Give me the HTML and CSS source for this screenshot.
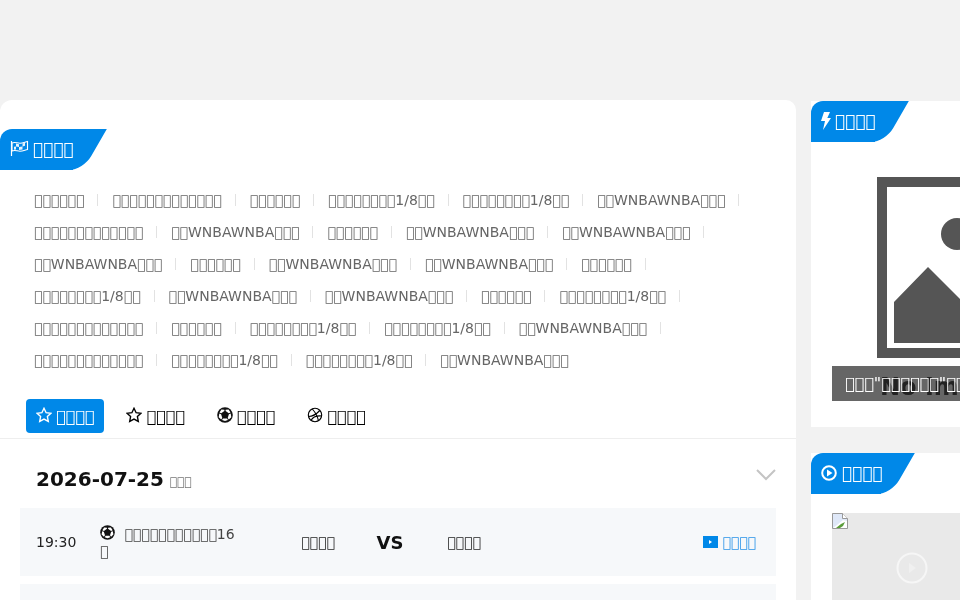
FILE: index.html
```html
<!DOCTYPE html>
<html>
<head>
    <meta charset="utf-8">
    <meta name="viewport" content="width=device-width, initial-scale=1.0">
    <link rel="stylesheet" href="styles.css">
</head>
<body>
    <div class="page">
        <div class="main-col">
            <div class="hot-box">
                <div class="tag">
                    <svg class="tag-icon" viewBox="0 0 19 17"><path d="M1.500 1v15" stroke="#fff" stroke-width="1.200"/><path d="M2 3c3-1.500 5 .3 8 .3 2.500 0 4.500-1 7.500-1.800v8c-3 .8-5 1.800-7.500 1.800-3 0-5-1.800-8-.3z" fill="none" stroke="#fff" stroke-width="1.100"/><path d="M6 3.500l3 .7v2.800l3.500-.5V3.500l2.500-.8v3l-2.500.8v3L9 10V7L6 6.500v3L4 9.800V6.800l2-.3z" fill="#fff" opacity=".9"/></svg>
                    <span>&#xE000;&#xE000;&#xE000;&#xE000;</span>
                </div>
                <div class="hot-list">
                    <a>&#xE000;&#xE000;&#xE000;&#xE000;&#xE000;&#xE000;</a>
                    <a>&#xE000;&#xE000;&#xE000;&#xE000;&#xE000;&#xE000;&#xE000;&#xE000;&#xE000;&#xE000;&#xE000;&#xE000;&#xE000;</a>
                    <a>&#xE000;&#xE000;&#xE000;&#xE000;&#xE000;&#xE000;</a>
                    <a>&#xE000;&#xE000;&#xE000;&#xE000;&#xE000;&#xE000;&#xE000;&#xE000;1/8&#xE000;&#xE000;</a>
                    <a>&#xE000;&#xE000;&#xE000;&#xE000;&#xE000;&#xE000;&#xE000;&#xE000;1/8&#xE000;&#xE000;</a>
                    <a>&#xE000;&#xE000;WNBAWNBA&#xE000;&#xE000;&#xE000;</a>
                    <a>&#xE000;&#xE000;&#xE000;&#xE000;&#xE000;&#xE000;&#xE000;&#xE000;&#xE000;&#xE000;&#xE000;&#xE000;&#xE000;</a>
                    <a>&#xE000;&#xE000;WNBAWNBA&#xE000;&#xE000;&#xE000;</a>
                    <a>&#xE000;&#xE000;&#xE000;&#xE000;&#xE000;&#xE000;</a>
                    <a>&#xE000;&#xE000;WNBAWNBA&#xE000;&#xE000;&#xE000;</a>
                    <a>&#xE000;&#xE000;WNBAWNBA&#xE000;&#xE000;&#xE000;</a>
                    <a>&#xE000;&#xE000;WNBAWNBA&#xE000;&#xE000;&#xE000;</a>
                    <a>&#xE000;&#xE000;&#xE000;&#xE000;&#xE000;&#xE000;</a>
                    <a>&#xE000;&#xE000;WNBAWNBA&#xE000;&#xE000;&#xE000;</a>
                    <a>&#xE000;&#xE000;WNBAWNBA&#xE000;&#xE000;&#xE000;</a>
                    <a>&#xE000;&#xE000;&#xE000;&#xE000;&#xE000;&#xE000;</a>
                    <a>&#xE000;&#xE000;&#xE000;&#xE000;&#xE000;&#xE000;&#xE000;&#xE000;1/8&#xE000;&#xE000;</a>
                    <a>&#xE000;&#xE000;WNBAWNBA&#xE000;&#xE000;&#xE000;</a>
                    <a>&#xE000;&#xE000;WNBAWNBA&#xE000;&#xE000;&#xE000;</a>
                    <a>&#xE000;&#xE000;&#xE000;&#xE000;&#xE000;&#xE000;</a>
                    <a>&#xE000;&#xE000;&#xE000;&#xE000;&#xE000;&#xE000;&#xE000;&#xE000;1/8&#xE000;&#xE000;</a>
                    <a>&#xE000;&#xE000;&#xE000;&#xE000;&#xE000;&#xE000;&#xE000;&#xE000;&#xE000;&#xE000;&#xE000;&#xE000;&#xE000;</a>
                    <a>&#xE000;&#xE000;&#xE000;&#xE000;&#xE000;&#xE000;</a>
                    <a>&#xE000;&#xE000;&#xE000;&#xE000;&#xE000;&#xE000;&#xE000;&#xE000;1/8&#xE000;&#xE000;</a>
                    <a>&#xE000;&#xE000;&#xE000;&#xE000;&#xE000;&#xE000;&#xE000;&#xE000;1/8&#xE000;&#xE000;</a>
                    <a>&#xE000;&#xE000;WNBAWNBA&#xE000;&#xE000;&#xE000;</a>
                    <a>&#xE000;&#xE000;&#xE000;&#xE000;&#xE000;&#xE000;&#xE000;&#xE000;&#xE000;&#xE000;&#xE000;&#xE000;&#xE000;</a>
                    <a>&#xE000;&#xE000;&#xE000;&#xE000;&#xE000;&#xE000;&#xE000;&#xE000;1/8&#xE000;&#xE000;</a>
                    <a>&#xE000;&#xE000;&#xE000;&#xE000;&#xE000;&#xE000;&#xE000;&#xE000;1/8&#xE000;&#xE000;</a>
                    <a>&#xE000;&#xE000;WNBAWNBA&#xE000;&#xE000;&#xE000;</a>
                </div>
                <div class="tabs">
                    <a class="tab active">
                        <svg viewBox="0 0 16 16"><path d="M8 1.300l2.100 4.400 4.800.6-3.500 3.300.9 4.800L8 12.100l-4.300 2.300.9-4.800L1.100 6.300l4.800-.6z" fill="none" stroke="currentColor" stroke-width="1.400"/></svg>
                        <span>&#xE000;&#xE000;&#xE000;&#xE000;</span>
                    </a>
                    <a class="tab">
                        <svg viewBox="0 0 16 16"><path d="M8 1.300l2.100 4.400 4.800.6-3.500 3.300.9 4.800L8 12.100l-4.300 2.300.9-4.800L1.100 6.300l4.800-.6z" fill="none" stroke="currentColor" stroke-width="1.400"/></svg>
                        <span>&#xE000;&#xE000;&#xE000;&#xE000;</span>
                    </a>
                    <a class="tab">
                        <svg viewBox="0 0 16 16"><circle cx="8" cy="8" r="7.800" fill="#111"/><path d="M8.600 4l3.200 2.300 1.700-.7-1.900-3-3 .2zM11.900 7.200l-1.200 3.700 1.100 1.700 2.500-2.400-.6-3.600zM10 11.400H6L5 13l3 1 3-1zM4.100 7.200l1.200 3.700-1.100 1.700-2.500-2.400.6-3.600zM7.400 4L4.200 6.300l-1.700-.7 1.900-3 3 .2z" fill="#fff"/></svg>
                        <span>&#xE000;&#xE000;&#xE000;&#xE000;</span>
                    </a>
                    <a class="tab">
                        <svg viewBox="0 0 16 16"><g fill="none" stroke="currentColor" stroke-width="1.100"><circle cx="8" cy="8" r="6.700"/><path d="M5.300 2C8 5 10.500 9 11.500 14M1.500 9.500C6 9.500 10 6.500 12.800 3.500M4 13.500c1.500-3 5-5 10.500-4.500"/></g></svg>
                        <span>&#xE000;&#xE000;&#xE000;&#xE000;</span>
                    </a>
                </div>
            </div>
            <div class="match-head">
                <div class="match-date">
                    <b>2026-07-25</b>
                    <span>&#xE000;&#xE000;&#xE000;</span>
                </div>
                <svg class="chevron" viewBox="0 0 20 12"><path d="M1 1l9 9 9-9" fill="none" stroke="#c4c4c4" stroke-width="2"/></svg>
            </div>
            <div class="match-row">
                <div class="match-time">19:30</div>
                <div class="match-name">
                    <svg viewBox="0 0 16 16"><circle cx="8" cy="8" r="7.800" fill="#111"/><path d="M8.600 4l3.200 2.300 1.700-.7-1.900-3-3 .2zM11.900 7.200l-1.200 3.700 1.100 1.700 2.500-2.400-.6-3.600zM10 11.400H6L5 13l3 1 3-1zM4.100 7.200l1.200 3.700-1.100 1.700-2.500-2.400.6-3.600zM7.400 4L4.200 6.300l-1.700-.7 1.900-3 3 .2z" fill="#fff"/></svg>
                    &#xE000;&#xE000;&#xE000;&#xE000;&#xE000;&#xE000;&#xE000;&#xE000;&#xE000;&#xE000;&#xE000;16<br>&#xE000;
                </div>
                <div class="team">&#xE000;&#xE000;&#xE000;&#xE000;</div>
                <div class="vs">VS</div>
                <div class="team">&#xE000;&#xE000;&#xE000;&#xE000;</div>
                <a class="watch">
                    <svg viewBox="0 0 15 12"><rect width="15" height="12" fill="#0088e8"/><path d="M6 4l3 2-3 2z" fill="#fff"/></svg>
                    &#xE000;&#xE000;&#xE000;&#xE000;
                </a>
            </div>
            <div class="match-row"></div>
        </div>
        <div class="side-col">
            <div class="side-box first">
                <div class="tag news">
                    <svg class="tag-icon bolt" viewBox="0 0 10 18"><path d="M3 0h6L6.300 6H10L2 18l2-9H0z" fill="#fff"/></svg>
                    <span>&#xE000;&#xE000;&#xE000;&#xE000;</span>
                </div>
                <div class="news-pic">
                    <svg class="no-image" viewBox="0 0 360 300">
                        <rect x="5" y="5" width="350" height="171" fill="none" stroke="#555" stroke-width="10"/>
                        <circle cx="80" cy="57" r="16" fill="#555"/>
                        <path d="M17 166V125L51 90l60 60 45-24 60 40z" fill="#555"/>
                        <text x="3" y="218" class="no-image-text">No Image</text>
                    </svg>
                    <div class="caption">&#xE000;&#xE000;&#xE000;"&#xE000;&#xE000;&#xE000;&#xE000;&#xE000;&#xE000;"&#xE000;&#xE000;&#xE000;&#xE000;&#xE000;</div>
                </div>
            </div>
            <div class="side-box">
                <div class="tag wide">
                    <svg class="tag-icon play-icon" viewBox="0 0 16 16"><circle cx="8" cy="8" r="6.800" fill="none" stroke="#fff" stroke-width="2"/><path d="M6 4.500L11.500 8 6 11.500z" fill="#fff"/></svg>
                    <span>&#xE000;&#xE000;&#xE000;&#xE000;</span>
                </div>
                <div class="video-pic">
                    <svg class="broken" viewBox="0 0 16 16"><path d="M.5.500h10l5 5v10H.5z" fill="#dfe8f8" stroke="#999"/><path d="M1 15l4-3 6-5 4 1v7z" fill="#fff"/><path d="M4 15l5-4 4-2-2 4-3 2z" fill="#5a9c3a"/><path d="M10.500.5v5h5" fill="#fff" stroke="#999"/></svg>
                    <svg class="play" viewBox="0 0 32 32"><circle cx="16" cy="16" r="14.500" fill="none" stroke="#f6f6f6" stroke-width="2"/><path d="M13 11l7 5-7 5z" fill="#f0f0f0"/></svg>
                </div>
            </div>
        </div>
    </div>
</body>
</html>
```

FILE: styles.css
```css
* {
    margin: 0;
    padding: 0;
    box-sizing: border-box;
}

html, body {
    height: 100%;
    overflow: hidden;
}

body {
    background: #f2f2f2;
    font-family: "DejaVu Sans", sans-serif;
    color: #111;
}

.page {
    display: flex;
    width: 1200px;
    height: 600px;
    padding-top: 100px;
    gap: 15px;
    overflow: hidden;
    will-change: transform;
}

.main-col {
    width: 796px;
    flex-shrink: 0;
    background: #fff;
    border-radius: 12px 10px 0 0;
    padding-bottom: 20px;
}

.hot-box {
    padding-top: 29px;
    border-bottom: 1px solid #eee;
}

.tag {
    position: relative;
    display: inline-flex;
    align-items: center;
    gap: 4px;
    height: 41px;
    width: 73px;
    padding: 0 0 2px 10px;
    background: #0088e8;
    color: #fff;
    font-size: 17px;
    border-radius: 12px 0 0 0;
}

.tag::after {
    content: "";
    position: absolute;
    top: 0;
    bottom: 0;
    right: -22px;
    width: 40px;
    background: #0088e8;
    transform: skewX(-30deg);
    border-radius: 0 0 14px 0;
}

.tag > * {
    position: relative;
    z-index: 1;
    flex-shrink: 0;
}

.tag-icon {
    width: 19px;
    height: 17px;
}

.tag-icon.bolt {
    width: 10px;
    height: 18px;
}

.tag-icon.play-icon {
    width: 16px;
    height: 16px;
}

.tag.news {
    width: 64px;
}

.tag.wide {
    width: 70px;
    gap: 5px;
}

.hot-list {
    display: flex;
    flex-wrap: wrap;
    width: 740px;
    margin: 14px 0 0 34px;
    font-size: 14px;
    color: #666;
    line-height: 32px;
}

.hot-list a {
    position: relative;
    padding-right: 28px;
}

.hot-list a::after {
    content: "";
    position: absolute;
    right: 14px;
    top: 10px;
    width: 1px;
    height: 12px;
    background: #e2e2e2;
}

.hot-list a:last-child::after {
    display: none;
}

.tabs {
    display: flex;
    gap: 12px;
    margin: 23px 0 5px 26px;
}

.tab {
    display: flex;
    align-items: center;
    gap: 4px;
    height: 34px;
    padding: 0 10px;
    border-radius: 4px;
    font-size: 16px;
    color: #000;
}

.tab svg {
    width: 16px;
    height: 16px;
    margin-top: -2px;
}

.tab.active {
    background: #0088e8;
    color: #fff;
}

.match-head {
    display: flex;
    justify-content: space-between;
    align-items: center;
    padding: 11px 20px 0 36px;
    height: 69px;
}

.match-date b {
    font-size: 20px;
}

.match-date span {
    font-size: 12px;
    color: #777;
    margin-left: 1px;
}

.chevron {
    width: 20px;
    height: 12px;
    margin-top: -8px;
}

.match-row {
    display: flex;
    align-items: center;
    height: 68px;
    margin: 0 20px 8px;
    padding: 0 20px 0 16px;
    background: #f6f8fa;
    font-size: 14px;
}

.match-time {
    width: 64px;
    flex-shrink: 0;
    color: #222;
}

.match-name {
    width: 140px;
    flex-shrink: 0;
    margin-right: 38px;
    color: #444;
    line-height: 17px;
}

.match-name svg {
    width: 15px;
    height: 15px;
    margin-right: 5px;
    vertical-align: -1px;
}

.team {
    width: 80px;
    flex-shrink: 0;
    text-align: center;
    color: #222;
}

.vs {
    width: 66px;
    flex-shrink: 0;
    padding-right: 2px;
    font-size: 18px;
    font-weight: bold;
    text-align: center;
}

.watch {
    display: flex;
    align-items: center;
    gap: 4px;
    margin-left: auto;
    color: #2a93e8;
}

.watch svg {
    width: 15px;
    height: 12px;
}

.side-col {
    display: flex;
    flex-direction: column;
    gap: 26px;
    width: 389px;
    flex-shrink: 0;
    padding-top: 1px;
}

.side-box {
    background: #fff;
    padding-bottom: 26px;
}

.side-box.first {
    height: 326px;
}

.news-pic {
    position: relative;
    height: 224px;
    margin: 35px 21px 0;
}

.no-image {
    position: absolute;
    left: 45px;
    top: 0;
    width: 360px;
    height: 300px;
}

.no-image-text {
    font-size: 24px;
    font-weight: bold;
    fill: #555;
}

.caption {
    position: absolute;
    left: 0;
    right: 0;
    top: 189px;
    height: 35px;
    line-height: 35px;
    padding-left: 13px;
    background: rgba(0, 0, 0, 0.6);
    color: #fff;
    font-size: 16px;
    white-space: nowrap;
    overflow: hidden;
}

.video-pic {
    position: relative;
    height: 200px;
    margin: 19px 21px 0;
    background: #e9e9e9;
}

.broken {
    position: absolute;
    left: 0;
    top: 0;
    width: 16px;
    height: 16px;
}

.play {
    position: absolute;
    left: 64px;
    top: 39px;
    width: 32px;
    height: 32px;
}
```
